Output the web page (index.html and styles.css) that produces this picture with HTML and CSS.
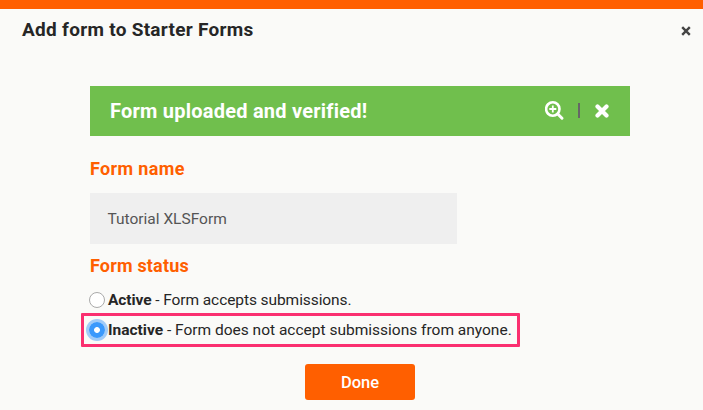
FILE: index.html
```html
<!DOCTYPE html>
<html lang="en">
<head>
<meta charset="utf-8">
<title>Add form</title>
<link rel="stylesheet" href="styles.css">
</head>
<body>
<div class="dialog">
  <header class="dialog-header">
    <h1 class="title">Add form to Starter Forms</h1>
    <svg class="close" width="10" height="10" viewBox="0 0 10 10"><path d="M1.2 1.2L8.8 8.8M8.8 1.2L1.2 8.8"/></svg>
  </header>
  <main class="content">
    <div class="banner">
      <span class="banner-text">Form uploaded and verified!</span>
      <svg class="zoom-icon" width="20" height="20" viewBox="0 0 20 20"><circle cx="7.8" cy="8" r="6.7"/><path class="handle" d="M12.8 13L17 17.2"/><path class="plus" d="M7.8 4.5V11.5M4.3 8H11.3"/></svg>
      <span class="divider"></span>
      <svg class="dismiss" width="14" height="14" viewBox="0 0 14 14"><path d="M2.5 2.5L11.5 11.5M11.5 2.5L2.5 11.5"/></svg>
    </div>
    <h2 class="label label-name">Form name</h2>
    <div class="field">Tutorial XLSForm</div>
    <h2 class="label label-status">Form status</h2>
    <div class="option"><i class="radio"></i><span class="active-text"><b>Active</b> - Form accepts submissions.</span></div>
    <div class="option highlighted"><i class="radio checked"></i><span class="inactive-text"><b>Inactive</b> - Form does not accept submissions from anyone.</span></div>
    <button class="done" type="button">Done</button>
  </main>
</div>
</body>
</html>
```
FILE: styles.css
```css
* { box-sizing: border-box; }
body {
  margin: 0;
  background: #fafaf8;
  color: #262626;
  font-family: Roboto, "Liberation Sans", sans-serif;
  font-size: 15.5px;
  overflow: hidden;
}
.dialog { height: 410px; border-top: 9px solid #ff5f00; }
.dialog-header {
  display: flex;
  align-items: center;
  justify-content: space-between;
  height: 42px;
  padding: 0 12px 0 22px;
}
.title { margin: 0; font-size: 19px; font-weight: 700; line-height: 42px; letter-spacing: 0.29px; }
.close { fill: none; stroke: #444; stroke-width: 2.4; margin-top: 1px; }
.content { display: flex; flex-direction: column; width: 540px; margin: 35px 0 0 90px; }
.banner {
  display: flex;
  align-items: center;
  height: 50px;
  padding: 0 21px 0 20px;
  background: #70bf4d;
  color: #fff;
}
.banner-text { flex: 1; font-size: 20px; font-weight: 700; letter-spacing: 0.23px; white-space: nowrap; }
.zoom-icon { fill: none; stroke: #fff; stroke-width: 2.6; }
.zoom-icon .handle { stroke-width: 3; stroke-linecap: round; }
.zoom-icon .plus { stroke-width: 1.8; }
.divider { width: 2px; height: 15px; margin: -1px 15px 0 13px; background: #666; }
.dismiss { fill: none; stroke: #fff; stroke-width: 4.2; stroke-linecap: round; }
.label { margin: 0; color: #ff5f00; font-size: 18px; font-weight: 700; line-height: 24px; }
.label-name { margin-top: 21px; letter-spacing: 0.36px; }
.field {
  width: 367px;
  height: 51px;
  margin-top: 12px;
  padding-left: 17.5px;
  background: #efefef;
  color: #555;
  line-height: 53px;
}
.label-status { margin-top: 10px; letter-spacing: 0.18px; }
.option { display: flex; align-items: center; height: 30px; margin-top: 7px; line-height: 30px; white-space: nowrap; }
.active-text { letter-spacing: -0.08px; }
.radio {
  flex: none;
  width: 16px;
  height: 16px;
  margin: 0 3px 0 -1px;
  border: 1px solid #aaa;
  border-radius: 50%;
  background: #fff;
}
.checked {
  border: 0;
  background: radial-gradient(circle, #fff 0 2.5px, #3b99fc 3.3px);
  box-shadow: 0 0 0 3px #a1cbf8;
}
.highlighted {
  width: 439px;
  height: 34px;
  margin: -2px 0 0 -9px;
  padding: 0 0 0 6px;
  border: 3px solid #fa2f70;
  border-radius: 1px;
}
.done {
  width: 110px;
  height: 36px;
  margin: 17px 0 0 215px;
  padding: 2px 0 0;
  border: 0;
  border-radius: 3px;
  background: #ff5f00;
  color: #fff;
  font: 500 16.5px/34px Roboto, "Liberation Sans", sans-serif;
}
```
